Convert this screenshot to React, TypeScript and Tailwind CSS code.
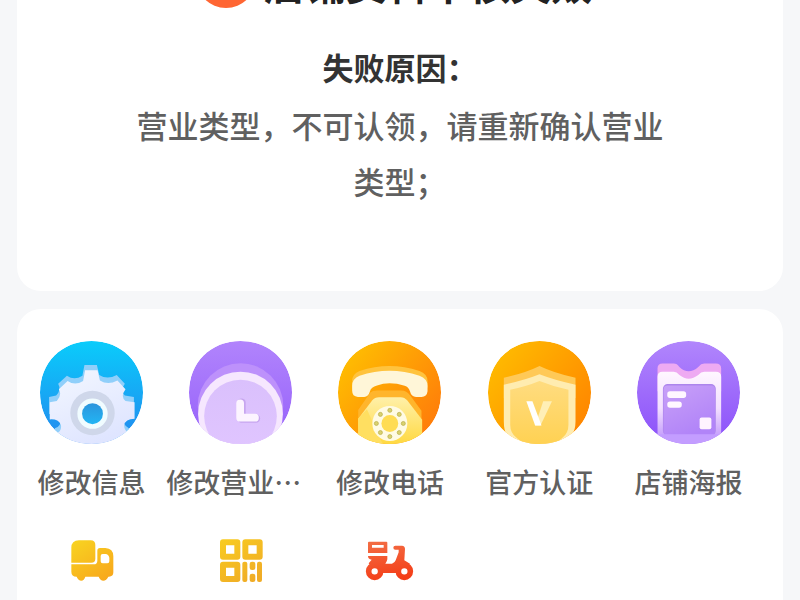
import React from 'react';

const DISC = 'M34 184 C34 95 98 31 187 31 C276 31 340 95 340 184 C340 273 276 337 187 337 C98 337 34 273 34 184Z';

interface DiscIconProps {
  id: string;
  from: string;
  to: string;
  diagonal?: boolean;
  children: React.ReactNode;
}

const DiscIcon: React.FC<DiscIconProps> = ({ id, from, to, diagonal, children }) => (
  <svg viewBox="34 31 306 306" className="size-[103px]" aria-hidden="true">
    <defs>
      <linearGradient id={`${id}-bg`} x1="0" y1="0" x2={diagonal ? '1' : '0'} y2={diagonal ? '0.8' : '1'}>
        <stop offset="0" stopColor={from} />
        <stop offset="1" stopColor={to} />
      </linearGradient>
      <clipPath id={`${id}-clip`}>
        <path d={DISC} />
      </clipPath>
    </defs>
    <g clipPath={`url(#${id}-clip)`}>
      <path d={DISC} fill={`url(#${id}-bg)`} />
      {children}
    </g>
  </svg>
);

const GEAR =
  'M63 213 L84 209 Q100 192 90 174 L116 150 Q138 165 162 150 L168 118 H205 L212 148 Q236 163 264 148 L288 174 Q272 196 288 209 L315 213 V262 Q287 262 284 282 Q284 298 300 306 V340 H80 V306 Q100 300 96 280 Q88 262 63 264Z';

const GearIcon = () => (
  <DiscIcon id="gear" from="#0accfb" to="#2387ee">
    <defs>
      <linearGradient id="gear-body" x1="0" y1="0" x2="0.5" y2="1">
        <stop offset="0" stopColor="#f3f7ff" />
        <stop offset="1" stopColor="#dfe5ff" />
      </linearGradient>
      <linearGradient id="gear-hole" x1="0" y1="0" x2="0" y2="1">
        <stop offset="0" stopColor="#2b95dc" />
        <stop offset="1" stopColor="#22b5f4" />
      </linearGradient>
    </defs>
    <path d={GEAR} fill="#90cffa" transform="translate(-2 -16)" />
    <path d={GEAR} fill="url(#gear-body)" />
    <circle cx="190" cy="245" r="66" fill="#cfd7ea" />
    <circle cx="190" cy="247" r="45" fill="#f0fcff" />
    <circle cx="190" cy="247" r="31" fill="url(#gear-hole)" />
  </DiscIcon>
);

const ClockIcon = () => (
  <DiscIcon id="clock" from="#b184fc" to="#9560fa">
    <defs>
      <linearGradient id="clock-face" x1="0" y1="0" x2="0" y2="1">
        <stop offset="0" stopColor="#dac0fc" />
        <stop offset="1" stopColor="#e0c5ff" />
      </linearGradient>
    </defs>
    <circle cx="187" cy="224" r="127" fill="#bd91fb" />
    <circle cx="187" cy="248" r="126" fill="#f6e7fe" />
    <circle cx="187" cy="254" r="108" fill="url(#clock-face)" />
    <path d="M190 214 V261 H233" fill="none" stroke="#c7a6ef" strokeWidth="25" strokeLinecap="round" strokeLinejoin="round" />
    <path d="M186 216 V259 H230" fill="none" stroke="#fcf4ff" strokeWidth="23" strokeLinecap="round" strokeLinejoin="round" />
  </DiscIcon>
);

const HANDSET =
  'M76 164 Q76 143 98 134 Q187 105 276 134 Q300 143 300 164 V180 Q298 197 282 197 H266 Q252 197 248 181 Q244 168 232 164 Q187 150 150 163 Q132 168 129 180 Q124 197 112 197 H93 Q76 196 76 178Z';

const PhoneIcon = () => (
  <DiscIcon id="phone" from="#ffc600" to="#ff7a0a" diagonal>
    <defs>
      <linearGradient id="phone-body" x1="0" y1="0" x2="0" y2="1">
        <stop offset="0" stopColor="#fff0a9" />
        <stop offset="1" stopColor="#ffd83f" />
      </linearGradient>
    </defs>
    <path d="M130 184 Q136 178 150 178 H222 Q238 178 248 192 L282 238 V340 H94 V236Z" fill="#ffb52c" />
    <path d="M94 262 L136 207 Q143 198 156 198 H220 Q232 198 240 208 L284 265 V340 H94Z" fill="url(#phone-body)" />
    <path d="M94 262 L120 234 L158 320 L170 340 H94Z" fill="#ffdf61" />
    <path d={HANDSET} fill="#ffc33e" transform="translate(0 -14)" />
    <path d={HANDSET} fill="#fff6d8" />
    <circle cx="188" cy="276" r="52" fill="#fffbe4" />
    <circle cx="188" cy="276" r="25" fill="#ffdc53" />
    {[
      [188, 237],
      [216, 249],
      [228, 276],
      [216, 303],
      [188, 315],
      [160, 303],
      [148, 276],
      [160, 249],
    ].map(([cx, cy]) => (
      <circle key={`${cx}-${cy}`} cx={cx} cy={cy} r="6" fill="#d9d16e" stroke="#b8ad48" strokeWidth="2" />
    ))}
  </DiscIcon>
);

const ShieldIcon = () => (
  <DiscIcon id="shield" from="#ffc100" to="#ff8400" diagonal>
    <defs>
      <linearGradient id="shield-face" x1="0" y1="0" x2="0" y2="1">
        <stop offset="0" stopColor="#ffdc80" />
        <stop offset="1" stopColor="#ffd151" />
      </linearGradient>
    </defs>
    <path d="M81 140 Q145 126 187 105 Q230 126 294 140 V200 H81Z" fill="#ffc957" />
    <path d="M81 161 Q145 147 187 130 Q230 147 294 161 V270 Q294 296 282 312 L262 345 H112 L90 312 Q81 296 81 270Z" fill="#ffecb0" />
    <path d="M100 176 Q148 166 187 150 Q226 166 273 176 V280 Q273 304 256 318 L225 345 H150 L118 318 Q100 304 100 280Z" fill="url(#shield-face)" />
    <path d="M198 210 H224 L190 282 H174Z" fill="#ffefb6" />
    <path d="M148 210 H166 L193 282 H174Z" fill="#ffffff" />
  </DiscIcon>
);

const PosterIcon = () => (
  <DiscIcon id="poster" from="#b186fc" to="#8b50fa">
    <defs>
      <linearGradient id="poster-page" x1="0" y1="0" x2="0" y2="1">
        <stop offset="0" stopColor="#fff6ff" />
        <stop offset="0.5" stopColor="#f3dfff" />
        <stop offset="1" stopColor="#b78afb" />
      </linearGradient>
      <linearGradient id="poster-card" x1="0" y1="0" x2="0.5" y2="1">
        <stop offset="0" stopColor="#c8a0f8" />
        <stop offset="1" stopColor="#b184f8" />
      </linearGradient>
    </defs>
    <path d="M95 112 Q95 98 110 98 H143 Q153 98 160 108 Q187 134 216 108 Q224 98 234 98 H268 Q284 98 284 112 V180 H95Z" fill="#eeaaf2" />
    <path d="M95 137 Q95 122 110 122 H143 Q152 122 160 132 Q187 154 216 132 Q224 122 234 122 H268 Q284 122 284 137 V340 H95Z" fill="url(#poster-page)" />
    <rect x="111" y="159" width="157" height="153" rx="14" fill="#ad85ec" />
    <rect x="113" y="163" width="153" height="148" rx="12" fill="url(#poster-card)" />
    <rect x="95" y="308" width="190" height="32" fill="#c39dff" />
    <rect x="124" y="180" width="56" height="20" rx="8" fill="#fff7ff" />
    <rect x="124" y="211" width="43" height="18" rx="8" fill="#fff7ff" />
    <rect x="220" y="258" width="35" height="35" rx="6" fill="#fff3ff" />
  </DiscIcon>
);

const TruckIcon = () => (
  <svg viewBox="47 30 156 156" className="size-[52px]" aria-hidden="true">
    <defs>
      <linearGradient id="truck-fill" gradientUnits="userSpaceOnUse" x1="70" y1="46" x2="150" y2="168">
        <stop offset="0" stopColor="#f8d321" />
        <stop offset="1" stopColor="#f8aa1c" />
      </linearGradient>
    </defs>
    <g fill="url(#truck-fill)">
      <path d="M63 113 V69 Q63 46 86 46 H121 Q135 46 135 60 V101 Q135 113 123 113Z" />
      <path
        fillRule="evenodd"
        d="M63 118 H130 Q141 118 141 107 V77 Q141 69 149 69 H165 Q189 70 189 94 V142 Q189 155 176 155 H174 Q168 167 159 167 Q150 167 145 155 H105 Q101 167 93 167 Q84 167 79 155 Q63 155 63 140Z M157 87 Q151 87 151 93 V109 Q151 115 157 115 H171 Q177 115 177 109 V98 Q174 87 166 87Z"
      />
    </g>
  </svg>
);

const QrIcon = () => (
  <svg viewBox="494 30 156 156" className="size-[52px]" aria-hidden="true">
    <defs>
      <linearGradient id="qr-fill" gradientUnits="userSpaceOnUse" x1="520" y1="42" x2="600" y2="172">
        <stop offset="0" stopColor="#f8cb20" />
        <stop offset="1" stopColor="#f0ac26" />
      </linearGradient>
    </defs>
    <g fill="none" stroke="url(#qr-fill)" strokeWidth="18" strokeLinejoin="round">
      <rect x="518" y="52" width="43" height="43" />
      <rect x="585" y="52" width="43" height="43" />
      <rect x="518" y="119" width="43" height="43" />
    </g>
    <g fill="url(#qr-fill)">
      <rect x="576" y="110" width="15" height="61" rx="6" />
      <rect x="598" y="110" width="17" height="25" rx="7" />
      <rect x="598" y="146" width="17" height="25" rx="7" />
      <rect x="620" y="110" width="15" height="61" rx="6" />
    </g>
  </svg>
);

const ScooterIcon = () => (
  <svg viewBox="942 30 156 156" className="size-[52px]" aria-hidden="true">
    <defs>
      <linearGradient id="scooter-fill" gradientUnits="userSpaceOnUse" x1="1000" y1="50" x2="1020" y2="166">
        <stop offset="0" stopColor="#f36b42" />
        <stop offset="1" stopColor="#f43d17" />
      </linearGradient>
    </defs>
    <g fill="url(#scooter-fill)">
      <path fillRule="evenodd" d="M957 50 H1009 Q1012 50 1012 53 V84 H954 V53 Q954 50 957 50Z M966 60 V68 H1001 V60Z" />
      <path d="M954 93 H1012 V103 Q1011 110 1006 116 H1026 Q1034 114 1037 106 L1046 82 V74 H1036 Q1030 74 1030 68 Q1030 62 1036 62 H1056 Q1065 63 1065 72 L1063 106 L1080 116 L1061 144 H975 L956 115 L965 104 Q954 103 954 93Z" />
    </g>
    <g fill="#ffffff" stroke="url(#scooter-fill)" strokeWidth="17">
      <circle cx="974" cy="139" r="18" />
      <circle cx="1063" cy="139" r="18" />
    </g>
  </svg>
);

const actions = [
  { label: '修改信息', icon: <GearIcon /> },
  { label: '修改营业…', icon: <ClockIcon />, long: true },
  { label: '修改电话', icon: <PhoneIcon /> },
  { label: '官方认证', icon: <ShieldIcon /> },
  { label: '店铺海报', icon: <PosterIcon /> },
];

const shortcuts = [
  { name: '配送', icon: <TruckIcon /> },
  { name: '二维码', icon: <QrIcon /> },
  { name: '外卖', icon: <ScooterIcon /> },
];

const App: React.FC = () => {
  return (
    <main
      lang="zh-CN"
      className="h-screen overflow-hidden bg-[#f6f7f9] px-[17px] font-['Noto_Sans_CJK_SC',sans-serif] font-medium"
    >
      <section className="rounded-b-3xl bg-white pb-20 text-center">
        {/* Status line, scrolled mostly out of view */}
        <div className="flex h-2 items-end justify-center gap-2 pr-3">
          <div className="size-[60px] shrink-0 rounded-full bg-[#ff6633]" />
          <h1 className="text-[41px] leading-[52px] font-bold text-[#222222]">店铺资料审核失败</h1>
        </div>
        <h2 className="mt-8 text-[31px] leading-[54px] font-bold text-[#333333]">失败原因：</h2>
        <p className="mx-auto mt-[3px] mb-0.5 max-w-[540px] text-[31px] leading-[56px] text-[#606060]">
          营业类型，不可认领，请重新确认营业类型；
        </p>
      </section>

      <section className="mt-[18px] rounded-t-3xl bg-white pr-5 pb-20">
        <div className="grid grid-cols-5 gap-y-[33px] pt-8">
          {actions.map(({ label, icon, long }) => (
            <button key={label} type="button" className="flex min-w-0 flex-col items-center gap-[18px]">
              {icon}
              <span
                className={`w-full text-[27px] leading-10 whitespace-nowrap text-[#606060] ${long ? 'text-left' : 'text-center'}`}
              >
                {label}
              </span>
            </button>
          ))}
          {shortcuts.map(({ name, icon }) => (
            <button key={name} type="button" aria-label={name} className="flex justify-center">
              {icon}
            </button>
          ))}
        </div>
      </section>
    </main>
  );
};

export default App;
